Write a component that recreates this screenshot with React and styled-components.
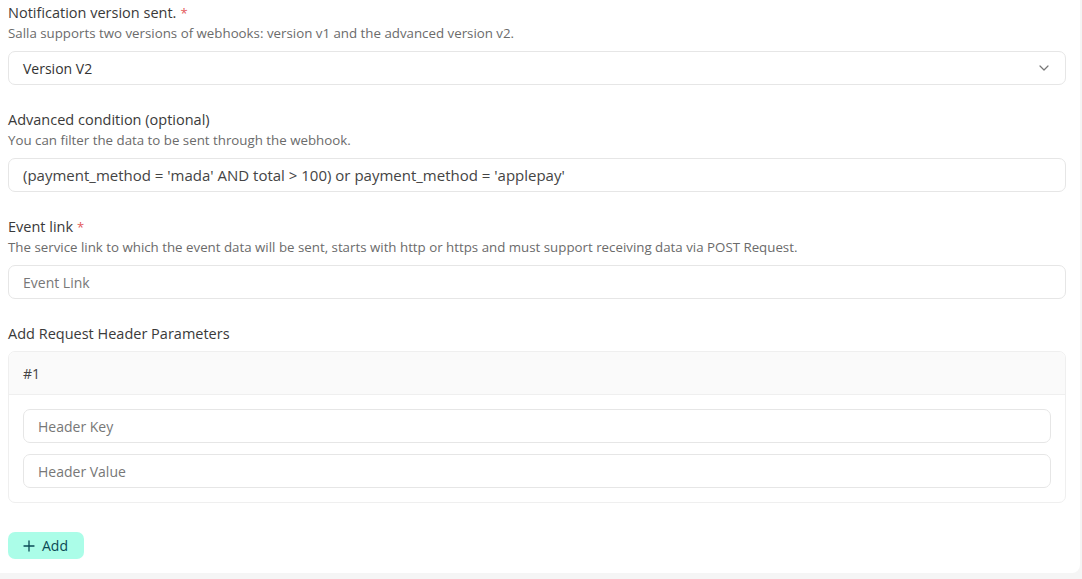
import React, { useState } from "react";
import styled, { createGlobalStyle } from "styled-components";

const GlobalStyle = createGlobalStyle`
	html, body {
		margin: 0;
		padding: 0;
		background: #f5f5f5;
		font-family: "Open Sans", "Noto Sans", sans-serif;
	}
	* {
		box-sizing: border-box;
	}
`;

const Page = styled.div`
	width: 1082px;
	height: 579px;
	background: #f5f5f5;
	overflow: hidden;
`;

const Card = styled.div`
	width: 1080px;
	background: #fff;
	border-radius: 0 0 8px 0;
	padding: 3px 14px 14px 8px;
`;

const Field = styled.div`
	display: flex;
	flex-direction: column;
	margin-bottom: 25px;
`;

const Label = styled.div`
	font-size: 14.5px;
	line-height: 20px;
	color: #3a3a3a;
	margin-bottom: 1px;
`;

const Required = styled.span`
	color: #e35a5a;
	margin-left: 4px;
	font-size: 13px;
`;

const Hint = styled.div`
	font-size: 13.3px;
	line-height: 18px;
	color: #6b6b6b;
	margin-bottom: 9px;
	white-space: nowrap;
`;

const InputStyled = styled.input`
	height: 34px;
	width: 100%;
	border: 1px solid #e6e6e6;
	border-radius: 7px;
	padding: 0 14px;
	font-family: "Open Sans", "Noto Sans", sans-serif;
	font-size: ${p => (p.$code ? "15px" : "14px")};
	color: #444;
	background: #fff;
	outline: none;
	&::placeholder {
		color: #777;
	}
`;

const SelectBox = styled.div`
	height: 34px;
	width: 100%;
	border: 1px solid #e6e6e6;
	border-radius: 7px;
	padding: 0 16px 0 14px;
	display: flex;
	align-items: center;
	justify-content: space-between;
	font-size: 14px;
	color: #333;
`;

const Params = styled.div`
	border: 1px solid #efefef;
	border-radius: 7px;
	margin-top: 7px;
	overflow: hidden;
`;

const ParamsHead = styled.div`
	height: 43px;
	background: #fafafa;
	border-bottom: 1px solid #efefef;
	display: flex;
	align-items: center;
	padding: 0 14px;
	font-size: 14px;
	color: #444;
`;

const ParamsBody = styled.div`
	display: flex;
	flex-direction: column;
	gap: 11px;
	padding: 14px;
`;

const AddButton = styled.button`
	margin-top: 29px;
	height: 27px;
	width: 76px;
	border: none;
	border-radius: 7px;
	background: #abfde8;
	color: #0b4a55;
	font-family: "Open Sans", "Noto Sans", sans-serif;
	font-size: 14px;
	display: flex;
	align-items: center;
	gap: 7px;
	padding: 0 0 0 15px;
`;

const Chevron = () => (
	<svg width="10" height="6" viewBox="0 0 10 6" fill="none">
		<path d="M1 1l4 4 4-4" stroke="#777" strokeWidth="1.2" strokeLinecap="round" strokeLinejoin="round" />
	</svg>
);

const Plus = () => (
	<svg width="12" height="12" viewBox="0 0 12 12" fill="none">
		<path d="M6 1v10M1 6h10" stroke="#0b4a55" strokeWidth="1.3" strokeLinecap="round" />
	</svg>
);

export default function App() {
	const [condition, setCondition] = useState(
		"(payment_method = 'mada' AND total > 100) or payment_method = 'applepay'"
	);

	return (
		<Page>
			<GlobalStyle />
			<Card>
				<Field>
					<Label>
						Notification version sent.<Required>*</Required>
					</Label>
					<Hint>Salla supports two versions of webhooks: version v1 and the advanced version v2.</Hint>
					<SelectBox>
						<span>Version V2</span>
						<Chevron />
					</SelectBox>
				</Field>
				<Field>
					<Label>Advanced condition (optional)</Label>
					<Hint>You can filter the data to be sent through the webhook.</Hint>
					<InputStyled $code value={condition} onChange={e => setCondition(e.target.value)} />
				</Field>
				<Field>
					<Label>
						Event link<Required>*</Required>
					</Label>
					<Hint>
						The service link to which the event data will be sent, starts with http or https and must support receiving data via POST Request.
					</Hint>
					<InputStyled placeholder="Event Link" />
				</Field>
				<Label>Add Request Header Parameters</Label>
				<Params>
					<ParamsHead>#1</ParamsHead>
					<ParamsBody>
						<InputStyled placeholder="Header Key" />
						<InputStyled placeholder="Header Value" />
					</ParamsBody>
				</Params>
				<AddButton>
					<Plus />
					Add
				</AddButton>
			</Card>
		</Page>
	);
}
